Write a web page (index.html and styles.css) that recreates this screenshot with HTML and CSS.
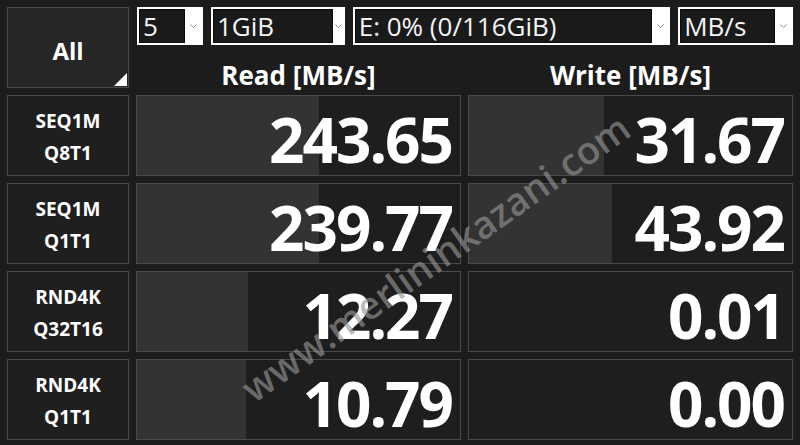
FILE: index.html
```html
<!DOCTYPE html>
<html>
<head>
<meta charset="utf-8">
<link rel="stylesheet" href="styles.css">
</head>
<body>
<div class="app">
  <div class="all-btn"><span>All</span><i class="corner"></i></div>
  <div class="top">
    <div class="combos">
      <div class="combo c1"><div class="val">5</div><svg class="chev" width="7" height="4" viewBox="0 0 7 4"><polyline points="0.5,0.5 3.5,3.5 6.5,0.5" fill="none" stroke="#8a8a8a" stroke-width="1"/></svg></div>
      <div class="combo c2 narrow"><div class="val">1GiB</div><svg class="chev" width="7" height="4" viewBox="0 0 7 4"><polyline points="0.5,0.5 3.5,3.5 6.5,0.5" fill="none" stroke="#8a8a8a" stroke-width="1"/></svg></div>
      <div class="combo c3"><div class="val">E: 0% (0/116GiB)</div><svg class="chev" width="7" height="4" viewBox="0 0 7 4"><polyline points="0.5,0.5 3.5,3.5 6.5,0.5" fill="none" stroke="#8a8a8a" stroke-width="1"/></svg></div>
      <div class="combo c4"><div class="val">MB/s</div><svg class="chev" width="7" height="4" viewBox="0 0 7 4"><polyline points="0.5,0.5 3.5,3.5 6.5,0.5" fill="none" stroke="#8a8a8a" stroke-width="1"/></svg></div>
    </div>
    <div class="heads">
      <div class="head">Read [MB/s]</div>
      <div class="head">Write [MB/s]</div>
    </div>
  </div>

  <div class="label"><span>SEQ1M</span><span>Q8T1</span></div>
  <div class="cell"><div class="bar" style="width:182px"></div><span class="num">243.65</span></div>
  <div class="cell"><div class="bar" style="width:135px"></div><span class="num">31.67</span></div>

  <div class="label"><span>SEQ1M</span><span>Q1T1</span></div>
  <div class="cell"><div class="bar" style="width:182px"></div><span class="num">239.77</span></div>
  <div class="cell"><div class="bar" style="width:143px"></div><span class="num">43.92</span></div>

  <div class="label"><span>RND4K</span><span>Q32T16</span></div>
  <div class="cell"><div class="bar" style="width:111px"></div><span class="num">12.27</span></div>
  <div class="cell"><span class="num">0.01</span></div>

  <div class="label"><span>RND4K</span><span>Q1T1</span></div>
  <div class="cell"><div class="bar" style="width:109px"></div><span class="num">10.79</span></div>
  <div class="cell"><span class="num">0.00</span></div>

  <div class="watermark">www.merlininkazani.com</div>
</div>
</body>
</html>
```

FILE: styles.css
```css
html, body {
  margin: 0;
  padding: 0;
  background: #1c1c1c;
  overflow: hidden;
}
body {
  width: 800px;
  height: 445px;
  font-family: "Open Sans", "Noto Sans", sans-serif;
  color: #ffffff;
}
.app {
  position: relative;
  display: grid;
  grid-template-columns: 122px 325px 325px;
  grid-template-rows: repeat(5, 81px);
  column-gap: 7px;
  row-gap: 7px;
  padding: 7px;
}
.all-btn {
  position: relative;
  box-sizing: border-box;
  border: 1px solid #4a4a4a;
  background: #262626;
  display: flex;
  align-items: center;
  justify-content: center;
  padding-top: 5px;
  font-weight: 700;
  font-size: 24px;
}
.corner {
  position: absolute;
  right: 1px;
  bottom: 1px;
  width: 0;
  height: 0;
  border-left: 13px solid transparent;
  border-bottom: 13px solid #ffffff;
}
.top {
  grid-column: 2 / 4;
  display: flex;
  flex-direction: column;
}
.combos {
  display: flex;
  gap: 8px;
  margin-left: 1px;
  height: 38px;
}
.combo {
  box-sizing: border-box;
  height: 38px;
  background: #ffffff;
  padding: 2px;
  display: flex;
  align-items: center;
}
.c1 { width: 66px; }
.c2 { width: 134px; }
.c3 { width: 318px; }
.c4 { width: 115px; }
.val {
  box-sizing: border-box;
  height: 34px;
  flex: 1;
  background: #1a1a1a;
  border: 1px solid #0c0c0c;
  font-size: 26px;
  line-height: 32px;
  padding-left: 3px;
  color: #f4f4f4;
  white-space: nowrap;
  overflow: hidden;
}
.chev {
  flex: none;
  margin: 0 4px 0 5px;
}
.narrow .chev {
  margin: 0 1px 0 2px;
}
.heads {
  display: flex;
  gap: 7px;
  margin-top: 15px;
}
.head {
  width: 325px;
  text-align: center;
  font-weight: 700;
  font-size: 26px;
  line-height: 30px;
}
.label {
  box-sizing: border-box;
  border: 1px solid #4a4a4a;
  background: #1f1f1f;
  display: flex;
  flex-direction: column;
  align-items: center;
  justify-content: center;
  padding-top: 2px;
  font-weight: 700;
  font-size: 19px;
  line-height: 32px;
}
.cell {
  position: relative;
  box-sizing: border-box;
  border: 1px solid #4a4a4a;
  background: #1e1e1e;
  display: flex;
  align-items: center;
  justify-content: flex-end;
  padding: 6px 8px 0 0;
}
.bar {
  position: absolute;
  left: 0;
  top: 0;
  bottom: 0;
  background: #333333;
}
.num {
  position: relative;
  font-weight: 700;
  font-size: 62px;
  line-height: 62px;
  letter-spacing: -2px;
}
.watermark {
  position: absolute;
  left: 435px;
  top: 257px;
  transform: translate(-50%, -50%) rotate(-35.4deg);
  white-space: nowrap;
  font-weight: 600;
  font-size: 38px;
  color: rgba(150, 150, 150, 0.65);
  pointer-events: none;
}
```
